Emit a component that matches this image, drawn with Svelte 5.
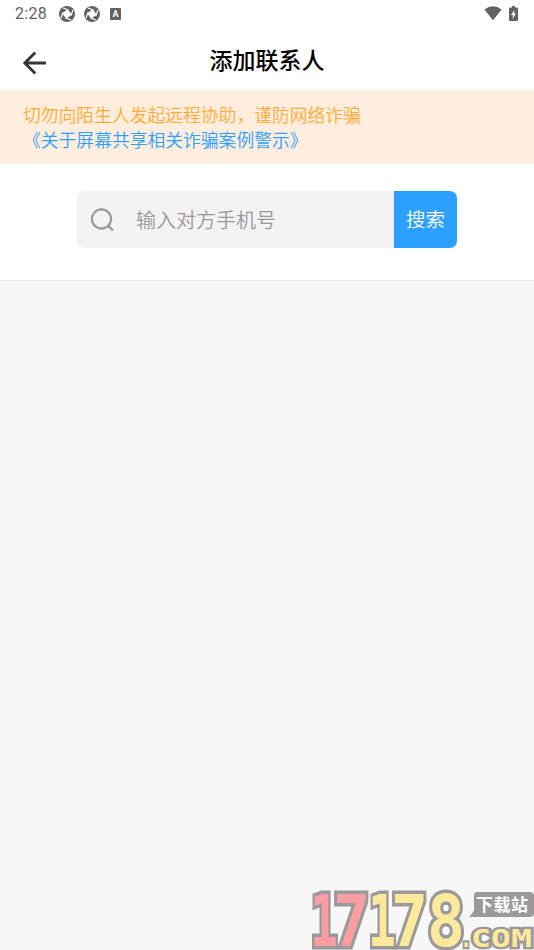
<script lang="ts">
  let phone = $state('');

  const digits = [
    { char: '1', x: 310, width: 28, tone: 'red' },
    { char: '7', x: 333, width: 37, tone: 'red' },
    { char: '1', x: 368, width: 28, tone: 'yellow' },
    { char: '7', x: 391, width: 37, tone: 'yellow' },
    { char: '8', x: 427, width: 38, tone: 'yellow' }
  ];

  const domain = [
    { char: '.', x: 460, width: 12 },
    { char: 'C', x: 471, width: 20 },
    { char: 'O', x: 491, width: 20 },
    { char: 'M', x: 511, width: 21 }
  ];
</script>

<div class="screen">
  <div class="status-bar">
    <span class="time">2:28</span>
    {#each [0, 1] as item (item)}
      <svg class="shutter" viewBox="0 0 16 16" width="16" height="16" aria-hidden="true">
        <circle cx="8" cy="8" r="8" fill="#626262" />
        <path d="M8.800 3.200 12.800 8.800 7.200 12.800 3.200 7.200Z" fill="#fff" />
        <path d="M9.500 4 4 2M12 9.500l2-5.500M6.500 12l5.500 2M4 6.500 2 12" stroke="#fff" stroke-width="1.200" />
      </svg>
    {/each}
    <span class="input-badge">A</span>
    <span class="spacer"></span>
    <svg class="wifi" viewBox="0 0 18 15" width="18" height="15" aria-hidden="true">
      <path d="M.4 3.600Q9-3 17.600 3.600L9 14.300Z" fill="#626262" />
    </svg>
    <svg viewBox="0 0 9 15" width="9" height="15" aria-hidden="true">
      <path d="M3 0h3v1.500h2q1 0 1 1V14q0 1-1 1H1q-1 0-1-1V2.500q0-1 1-1h2Z" fill="#626262" />
      <path d="M5.500 3.800 2 9h2l-.5 4L7 7.500H5Z" fill="#fff" />
    </svg>
  </div>

  <header>
    <button class="back" aria-label="返回">
      <svg viewBox="0 0 24 24" width="24" height="24" aria-hidden="true">
        <path d="M12.300 1.500 1.800 12l10.500 10.500M2 12h21" fill="none" stroke="#353535" stroke-width="2.800" />
      </svg>
    </button>
    <h1>添加联系人</h1>
  </header>

  <div class="notice">
    <p>切勿向陌生人发起远程协助，谨防网络诈骗</p>
    <p class="link">《关于屏幕共享相关诈骗案例警示》</p>
  </div>

  <div class="search-panel">
    <div class="search">
      <svg viewBox="0 0 24 24" width="24" height="24" aria-hidden="true">
        <circle cx="10.500" cy="11" r="9.600" fill="none" stroke="#999" stroke-width="2.200" />
        <path d="m17.300 17.800 4.600 4.700" stroke="#999" stroke-width="2.400" />
      </svg>
      <input type="text" placeholder="输入对方手机号" bind:value={phone} />
      <button class="submit">搜索</button>
    </div>
  </div>

  <svg class="watermark" viewBox="304 882 230 68" width="230" height="68">
    {#each digits as digit}
      <text
        class="digit {digit.tone}"
        x={digit.x}
        y="946"
        textLength={digit.width}
        lengthAdjust="spacingAndGlyphs">{digit.char}</text>
    {/each}
    <path d="M477 892h53q4 0 4 4v17q0 4-4 4h-61l5-6v-15q0-4 3-4Z" fill="#9b9999" />
    <text class="site" x="476" y="911" textLength="52">下载站</text>
    {#each domain as letter}
      <text
        class="domain"
        x={letter.x}
        y="947"
        textLength={letter.width}
        lengthAdjust="spacingAndGlyphs">{letter.char}</text>
    {/each}
  </svg>
</div>

<style>
  :global(body) {
    margin: 0;
    background: #f7f7f7;
  }

  .screen {
    position: relative;
    height: 950px;
    overflow: hidden;
    background: #f7f7f7;
    font-family: "Noto Sans CJK SC", sans-serif;
  }

  .status-bar {
    display: flex;
    align-items: center;
    box-sizing: border-box;
    height: 27px;
    padding: 0 16px 0 15px;
    background: #fff;
  }

  .time {
    width: 44px;
    color: #626262;
    font: 16px/27px Roboto, sans-serif;
    letter-spacing: 0.3px;
  }

  .shutter {
    margin-right: 9px;
  }

  .input-badge {
    width: 11px;
    height: 12px;
    margin-left: 1px;
    border-radius: 1px;
    background: #626262;
    color: #fff;
    font: bold 9px/12px Roboto, sans-serif;
    text-align: center;
  }

  .spacer {
    flex: 1;
  }

  .wifi {
    margin-right: 7px;
  }

  header {
    display: grid;
    grid-template-columns: 80px 1fr 80px;
    height: 63px;
    background: #fff;
  }

  button {
    padding: 0;
    border: 0;
    background: none;
    font-family: inherit;
  }

  .back {
    display: flex;
    align-items: center;
    height: 72px;
    padding-left: 23px;
  }

  h1 {
    margin: 0;
    color: #000;
    font-size: 23px;
    font-weight: 500;
    line-height: 64px;
    text-align: center;
  }

  .notice {
    box-sizing: border-box;
    height: 74px;
    padding: 12px 23px 0;
    background: #ffeedd;
  }

  p {
    margin: 0;
    color: #ffaa33;
    font-size: 17.8px;
    font-weight: 350;
    line-height: 25px;
  }

  .link {
    color: #2ba0ff;
  }

  .search-panel {
    box-sizing: border-box;
    height: 117px;
    padding: 27px 77px 0;
    border-bottom: 1px solid #eee;
    background: #fff;
  }

  .search {
    display: flex;
    align-items: center;
    width: 380px;
    height: 57px;
    padding-left: 14px;
    box-sizing: border-box;
    border-radius: 7px;
    overflow: hidden;
    background: #f3f3f3;
  }

  .search svg {
    flex: none;
  }

  input {
    flex: 1;
    min-width: 0;
    height: 57px;
    padding: 0 0 0 21px;
    border: 0;
    outline: 0;
    background: none;
    font: 350 20px "Noto Sans CJK SC", sans-serif;
  }

  input::placeholder {
    color: #999;
    opacity: 1;
  }

  .submit {
    width: 63px;
    height: 57px;
    padding-bottom: 2px;
    background: #2ba0ff;
    color: #fff;
    font-size: 19.5px;
    font-weight: 350;
  }

  .watermark {
    position: absolute;
    right: 0;
    bottom: 0;
  }

  .digit,
  .domain {
    font-family: "DejaVu Sans Mono", monospace;
    font-weight: bold;
    paint-order: stroke;
    stroke: #9b9999;
    stroke-linejoin: miter;
  }

  .digit {
    font-size: 72px;
    stroke-width: 7px;
  }

  .red {
    fill: #f99da3;
  }

  .yellow,
  .domain {
    fill: #fce99c;
  }

  .domain {
    font-size: 25px;
    stroke-width: 4.5px;
  }

  .site {
    fill: #fff;
    font-size: 17px;
    font-weight: bold;
  }
</style>
